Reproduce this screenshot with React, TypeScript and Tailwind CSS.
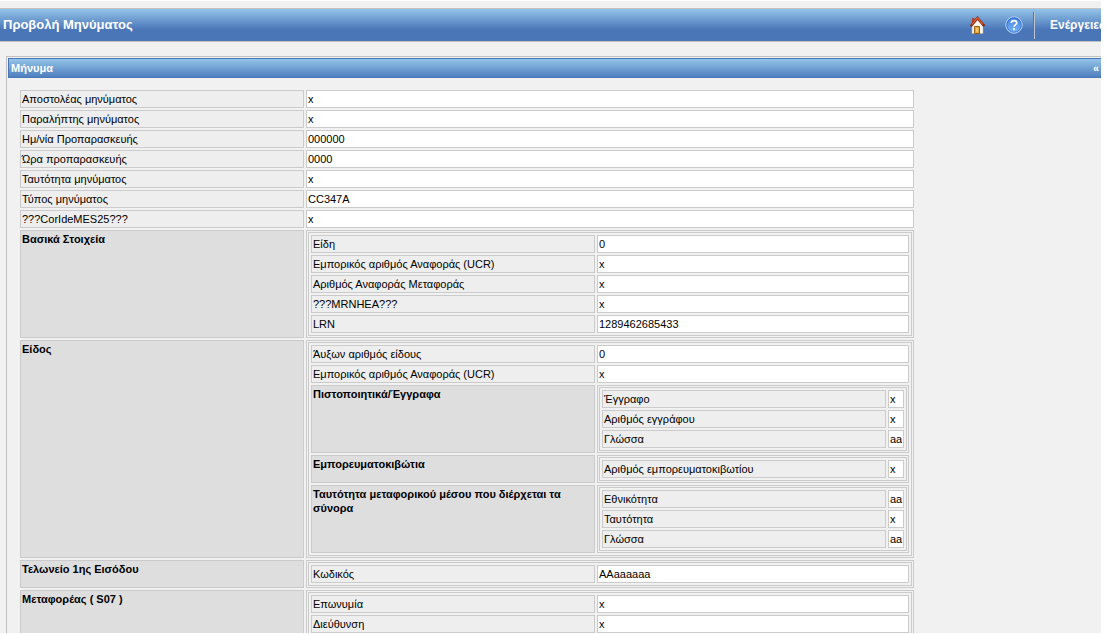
import type { ReactNode } from 'react';

type Field = { label: string; value: string };
type Group = { label: string; rows: Row[] };
type Row = Field | Group;

const rows: Row[] = [
  { label: 'Αποστολέας μηνύματος', value: 'x' },
  { label: 'Παραλήπτης μηνύματος', value: 'x' },
  { label: 'Ημ/νία Προπαρασκευής', value: '000000' },
  { label: 'Ώρα προπαρασκευής', value: '0000' },
  { label: 'Ταυτότητα μηνύματος', value: 'x' },
  { label: 'Τύπος μηνύματος', value: 'CC347A' },
  { label: '???CorIdeMES25???', value: 'x' },
  {
    label: 'Βασικά Στοιχεία',
    rows: [
      { label: 'Είδη', value: '0' },
      { label: 'Εμπορικός αριθμός Αναφοράς (UCR)', value: 'x' },
      { label: 'Αριθμός Αναφοράς Μεταφοράς', value: 'x' },
      { label: '???MRNHEA???', value: 'x' },
      { label: 'LRN', value: '1289462685433' },
    ],
  },
  {
    label: 'Είδος',
    rows: [
      { label: 'Άυξων αριθμός είδους', value: '0' },
      { label: 'Εμπορικός αριθμός Αναφοράς (UCR)', value: 'x' },
      {
        label: 'Πιστοποιητικά/Έγγραφα',
        rows: [
          { label: 'Έγγραφο', value: 'x' },
          { label: 'Αριθμός εγγράφου', value: 'x' },
          { label: 'Γλώσσα', value: 'aa' },
        ],
      },
      { label: 'Εμπορευματοκιβώτια', rows: [{ label: 'Αριθμός εμπορευματοκιβωτίου', value: 'x' }] },
      {
        label: 'Ταυτότητα μεταφορικού μέσου που διέρχεται τα σύνορα',
        rows: [
          { label: 'Εθνικότητα', value: 'aa' },
          { label: 'Ταυτότητα', value: 'x' },
          { label: 'Γλώσσα', value: 'aa' },
        ],
      },
    ],
  },
  { label: 'Τελωνείο 1ης Εισόδου', rows: [{ label: 'Κωδικός', value: 'AAaaaaaa' }] },
  {
    label: 'Μεταφορέας ( S07 )',
    rows: [
      { label: 'Επωνυμία', value: 'x' },
      { label: 'Διεύθυνση', value: 'x' },
    ],
  },
];

function MessageTable({ rows, nested = false }: { rows: Row[]; nested?: boolean }) {
  return (
    <table className={`w-full table-fixed border-separate border-spacing-0.5 ${nested ? 'border border-[#cbcbcb]' : 'max-w-[898px]'}`}>
      <colgroup>
        <col className="w-[284px]" />
        <col />
      </colgroup>
      <tbody>
        {rows.map((row, i) => (
          <tr key={i}>
            {'rows' in row ? (
              <>
                <th scope="row" className="border border-[#cbcbcb] bg-[#dedede] p-px text-left align-top font-bold">{row.label}</th>
                <td className="border border-[#cbcbcb] p-px">
                  <MessageTable rows={row.rows} nested />
                </td>
              </>
            ) : (
              <>
                <th scope="row" className="border border-[#cbcbcb] bg-[#eeeeee] p-px text-left font-normal">{row.label}</th>
                <td className="border border-[#cbcbcb] bg-white p-px">{row.value}</td>
              </>
            )}
          </tr>
        ))}
      </tbody>
    </table>
  );
}

function IconLink({ label, children }: { label: string; children: ReactNode }) {
  return (
    <a href="#" aria-label={label} className="block size-[18px]">
      {children}
    </a>
  );
}

function HomeIcon() {
  return (
    <svg viewBox="0 0 18 18" className="size-[18px]">
      <path d="M4 9 9.5 4 15 9v8.5H4z" fill="#fbf8f1" stroke="#b5ab9c" strokeWidth=".6" />
      <path d="M4 2h2.5v4L4 8z" fill="#b5452a" />
      <path d="M2.8 10.2 9.5 2l6.8 8.2" fill="none" stroke="#8a2a10" strokeWidth="2.6" />
      <path d="M3.6 8.6 9.5 1.8l5.4 6.6" fill="none" stroke="#e0633f" strokeWidth="1.1" />
      <path d="M6.5 10.5h5v7h-5z" fill="#e8a53c" stroke="#96601a" />
      <path d="M8 12h2v4H8z" fill="#f4c46a" />
    </svg>
  );
}

function HelpIcon() {
  return (
    <svg viewBox="0 0 18 18" className="size-[18px]">
      <defs>
        <linearGradient id="help" x1="0" y1="0" x2="0" y2="1">
          <stop offset="0" stopColor="#3f7fe0" />
          <stop offset="1" stopColor="#7db8f6" />
        </linearGradient>
      </defs>
      <circle cx="9" cy="9" r="8.2" fill="url(#help)" stroke="#b9d6f6" />
      <circle cx="9" cy="9" r="7.2" fill="none" stroke="#2f6acb" strokeWidth=".7" />
      <path d="M6.3 6.9C6.3 3.8 11.7 3.8 11.7 6.9c0 1.9-2.7 1.9-2.7 3.8" fill="none" stroke="#fff" strokeWidth="1.6" />
      <circle cx="9" cy="13.1" r="1.1" fill="#fff" />
    </svg>
  );
}

export default function App() {
  return (
    <div className="h-screen overflow-hidden bg-white py-px pr-[5px] font-['Liberation_Sans',Arial,sans-serif] text-[11px] leading-[14px] text-black">
      <div className="h-full overflow-hidden bg-[#f1f1f1] pt-[7px]">
        <header className="flex h-[34px] items-center border-y border-[#c0c0c0] bg-linear-to-b from-[#94c4e8] to-[#4a76b8] to-65% pl-[3px] text-white">
          <h1 className="flex-1 text-[13px] leading-4 font-bold">Προβολή Μηνύματος</h1>
          <nav className="flex items-center gap-[19px]">
            <IconLink label="Αρχική"><HomeIcon /></IconLink>
            <IconLink label="Βοήθεια"><HelpIcon /></IconLink>
          </nav>
          <div className="ml-2.5 h-[27px] w-0.5 border-r border-l border-r-[#c0c4cc] border-l-[#4a76b8]" />
          <button type="button" className="w-[66px] overflow-hidden pl-[15px] text-left text-[12px] leading-4 font-bold whitespace-nowrap">Ενέργειες</button>
        </header>

        <section className="mt-[14px] ml-1.5 border-t border-l border-[#c0c0c0] pt-px pl-px">
          <div className="flex h-5 items-center justify-between border border-r-0 border-[#4a76b8] bg-linear-to-b from-[#94c4e8] to-[#4f7fbe] pr-0.5 pl-0.5 font-bold text-white">
            <h2>Μήνυμα</h2>
            <button type="button" aria-label="Σύμπτυξη">«</button>
          </div>
          <div className="px-2.5 pt-2.5">
            <MessageTable rows={rows} />
          </div>
        </section>
      </div>
    </div>
  );
}
